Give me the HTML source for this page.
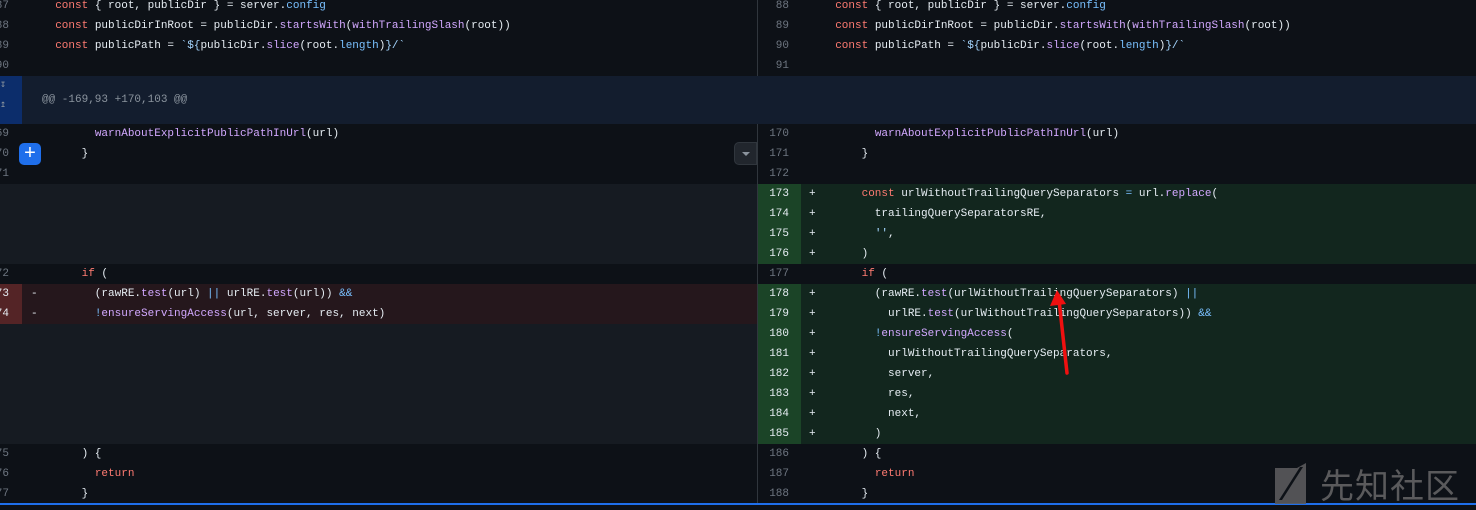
<!DOCTYPE html>
<html><head><meta charset="utf-8"><style>
*{margin:0;padding:0;box-sizing:border-box}
body{width:1476px;height:510px;overflow:hidden;background:#0d1117;font-family:"Liberation Mono",monospace;font-size:11px;color:#e6edf3;position:relative}
.r{position:absolute;height:20px;line-height:20px;white-space:pre}
.n{position:absolute;height:20px;line-height:20px;text-align:right;color:#6e7681;width:32px}
.k{color:#ff7b72}.f{color:#d2a8ff}.p{color:#79c0ff}.s{color:#a5d6ff}
.add{background:#12261e}.addn{background:#1b4427;color:#e6edf3}
.del{background:#25171c}.deln{background:#542426;color:#e6edf3}
.fill{background:#161b22}
.m{position:absolute;height:20px;line-height:20px}
</style></head><body>
<!-- pane bgs -->
<div style="position:absolute;left:0;top:76px;width:1476px;height:48px;background:#131d2e"></div>
<div style="position:absolute;left:0;top:76px;width:22px;height:48px;background:#0c2d6b;color:#8b949e;font-size:10px;line-height:20px;padding-left:0">&#8615;<br>&#8613;</div>
<div class="r" style="left:42px;top:90px;color:#8b949e">@@ -169,93 +170,103 @@</div>

<!-- left backgrounds -->
<div style="position:absolute;left:0;top:184px;width:757px;height:80px" class="fill"></div>
<div style="position:absolute;left:0;top:284px;width:757px;height:40px" class="del"></div>
<div style="position:absolute;left:0;top:284px;width:22px;height:40px" class="deln"></div>
<div style="position:absolute;left:0;top:324px;width:757px;height:120px" class="fill"></div>
<!-- right backgrounds -->
<div style="position:absolute;left:758px;top:184px;width:718px;height:80px" class="add"></div>
<div style="position:absolute;left:758px;top:184px;width:43px;height:80px" class="addn"></div>
<div style="position:absolute;left:758px;top:284px;width:718px;height:160px" class="add"></div>
<div style="position:absolute;left:758px;top:284px;width:43px;height:160px" class="addn"></div>
<div style="position:absolute;left:757px;top:124px;width:1px;height:380px;background:#30363d"></div>
<div style="position:absolute;left:757px;top:-4px;width:1px;height:80px;background:#30363d"></div>
<div style="position:absolute;left:0;top:503px;width:1476px;height:2px;background:#1f6feb"></div>

<!-- left line numbers (right edge at 9px) -->
<div class="n" style="left:-23px;top:-4px">87</div>
<div class="n" style="left:-23px;top:16px">88</div>
<div class="n" style="left:-23px;top:36px">89</div>
<div class="n" style="left:-23px;top:56px">90</div>
<div class="n" style="left:-23px;top:124px">169</div>
<div class="n" style="left:-23px;top:144px">170</div>
<div class="n" style="left:-23px;top:164px">171</div>
<div class="n" style="left:-23px;top:264px">172</div>
<div class="n" style="left:-23px;top:284px;color:#e6edf3">173</div>
<div class="n" style="left:-23px;top:304px;color:#e6edf3">174</div>
<div class="n" style="left:-23px;top:444px">175</div>
<div class="n" style="left:-23px;top:464px">176</div>
<div class="n" style="left:-23px;top:484px">177</div>

<!-- left code -->
<div class="r" style="left:42px;top:-4px">  <span class="k">const</span> { root, publicDir } = server.<span class="p">config</span></div>
<div class="r" style="left:42px;top:16px">  <span class="k">const</span> publicDirInRoot = publicDir.<span class="f">startsWith</span>(<span class="f">withTrailingSlash</span>(root))</div>
<div class="r" style="left:42px;top:36px">  <span class="k">const</span> publicPath = <span class="s">`${</span>publicDir.<span class="f">slice</span>(root.<span class="p">length</span>)<span class="s">}/`</span></div>
<div class="r" style="left:42px;top:124px">        <span class="f">warnAboutExplicitPublicPathInUrl</span>(url)</div>
<div class="r" style="left:42px;top:144px">      }</div>
<div class="r" style="left:42px;top:264px">      <span class="k">if</span> (</div>
<div class="m" style="left:31px;top:284px">-</div>
<div class="m" style="left:31px;top:304px">-</div>
<div class="r" style="left:42px;top:284px">        (rawRE.<span class="f">test</span>(url) <span class="p">||</span> urlRE.<span class="f">test</span>(url)) <span class="p">&amp;&amp;</span></div>
<div class="r" style="left:42px;top:304px">        <span class="p">!</span><span class="f">ensureServingAccess</span>(url, server, res, next)</div>
<div class="r" style="left:42px;top:444px">      ) {</div>
<div class="r" style="left:42px;top:464px">        <span class="k">return</span></div>
<div class="r" style="left:42px;top:484px">      }</div>

<div style="position:absolute;left:19px;top:143px;width:22px;height:22px;background:#1f6feb;border-radius:5px;color:#fff;font-family:'Liberation Sans',sans-serif;font-size:20px;line-height:21px;text-align:center">+</div>
<div style="position:absolute;left:734px;top:142px;width:23px;height:23px;background:#21262d;border:1px solid #30363d;border-radius:5px 0 0 5px"><div style="position:absolute;left:7px;top:9px;width:0;height:0;border-left:4px solid transparent;border-right:4px solid transparent;border-top:4px solid #8b949e"></div></div>

<!-- right line numbers (right edge at 789) -->
<div class="n" style="left:757px;top:-4px">88</div>
<div class="n" style="left:757px;top:16px">89</div>
<div class="n" style="left:757px;top:36px">90</div>
<div class="n" style="left:757px;top:56px">91</div>
<div class="n" style="left:757px;top:124px">170</div>
<div class="n" style="left:757px;top:144px">171</div>
<div class="n" style="left:757px;top:164px">172</div>
<div class="n" style="left:757px;top:184px;color:#e6edf3">173</div>
<div class="n" style="left:757px;top:204px;color:#e6edf3">174</div>
<div class="n" style="left:757px;top:224px;color:#e6edf3">175</div>
<div class="n" style="left:757px;top:244px;color:#e6edf3">176</div>
<div class="n" style="left:757px;top:264px">177</div>
<div class="n" style="left:757px;top:284px;color:#e6edf3">178</div>
<div class="n" style="left:757px;top:304px;color:#e6edf3">179</div>
<div class="n" style="left:757px;top:324px;color:#e6edf3">180</div>
<div class="n" style="left:757px;top:344px;color:#e6edf3">181</div>
<div class="n" style="left:757px;top:364px;color:#e6edf3">182</div>
<div class="n" style="left:757px;top:384px;color:#e6edf3">183</div>
<div class="n" style="left:757px;top:404px;color:#e6edf3">184</div>
<div class="n" style="left:757px;top:424px;color:#e6edf3">185</div>
<div class="n" style="left:757px;top:444px">186</div>
<div class="n" style="left:757px;top:464px">187</div>
<div class="n" style="left:757px;top:484px">188</div>

<!-- plus markers -->
<div class="m" style="left:809px;top:184px">+</div>
<div class="m" style="left:809px;top:204px">+</div>
<div class="m" style="left:809px;top:224px">+</div>
<div class="m" style="left:809px;top:244px">+</div>
<div class="m" style="left:809px;top:284px">+</div>
<div class="m" style="left:809px;top:304px">+</div>
<div class="m" style="left:809px;top:324px">+</div>
<div class="m" style="left:809px;top:344px">+</div>
<div class="m" style="left:809px;top:364px">+</div>
<div class="m" style="left:809px;top:384px">+</div>
<div class="m" style="left:809px;top:404px">+</div>
<div class="m" style="left:809px;top:424px">+</div>

<!-- right code -->
<div class="r" style="left:822px;top:-4px">  <span class="k">const</span> { root, publicDir } = server.<span class="p">config</span></div>
<div class="r" style="left:822px;top:16px">  <span class="k">const</span> publicDirInRoot = publicDir.<span class="f">startsWith</span>(<span class="f">withTrailingSlash</span>(root))</div>
<div class="r" style="left:822px;top:36px">  <span class="k">const</span> publicPath = <span class="s">`${</span>publicDir.<span class="f">slice</span>(root.<span class="p">length</span>)<span class="s">}/`</span></div>
<div class="r" style="left:822px;top:124px">        <span class="f">warnAboutExplicitPublicPathInUrl</span>(url)</div>
<div class="r" style="left:822px;top:144px">      }</div>
<div class="r" style="left:822px;top:184px">      <span class="k">const</span> urlWithoutTrailingQuerySeparators <span class="p">=</span> url.<span class="f">replace</span>(</div>
<div class="r" style="left:822px;top:204px">        trailingQuerySeparatorsRE,</div>
<div class="r" style="left:822px;top:224px">        <span class="s">''</span>,</div>
<div class="r" style="left:822px;top:244px">      )</div>
<div class="r" style="left:822px;top:264px">      <span class="k">if</span> (</div>
<div class="r" style="left:822px;top:284px">        (rawRE.<span class="f">test</span>(urlWithoutTrailingQuerySeparators) <span class="p">||</span></div>
<div class="r" style="left:822px;top:304px">          urlRE.<span class="f">test</span>(urlWithoutTrailingQuerySeparators)) <span class="p">&amp;&amp;</span></div>
<div class="r" style="left:822px;top:324px">        <span class="p">!</span><span class="f">ensureServingAccess</span>(</div>
<div class="r" style="left:822px;top:344px">          urlWithoutTrailingQuerySeparators,</div>
<div class="r" style="left:822px;top:364px">          server,</div>
<div class="r" style="left:822px;top:384px">          res,</div>
<div class="r" style="left:822px;top:404px">          next,</div>
<div class="r" style="left:822px;top:424px">        )</div>
<div class="r" style="left:822px;top:444px">      ) {</div>
<div class="r" style="left:822px;top:464px">        <span class="k">return</span></div>
<div class="r" style="left:822px;top:484px">      }</div>

<!-- red arrow -->
<svg style="position:absolute;left:0;top:0" width="1476" height="510">
<line x1="1067" y1="373" x2="1059" y2="300" stroke="#f01010" stroke-width="3.5" stroke-linecap="round"/>
<polygon points="1057,290 1050,306 1066,304" fill="#f01010"/>
<polygon points="1275,504 1275,468 1297,468 1306,463 1306,504" fill="#5a5a5c" opacity="0.9"/>
<polygon points="1279,500 1300,467 1303,467 1282,500" fill="#0d1117"/>
</svg>
<div style="position:absolute;left:1320px;top:464px;font-family:'Noto Sans CJK SC',sans-serif;font-size:34px;line-height:40px;color:#5a5a5c;letter-spacing:1px">先知社区</div>
</body></html>
